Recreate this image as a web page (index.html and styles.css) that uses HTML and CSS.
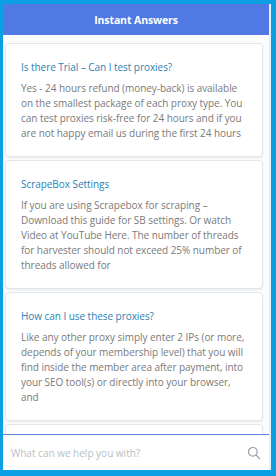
FILE: index.html
```html
<!DOCTYPE html>
<html>
<head>
<meta charset="utf-8">
<link rel="stylesheet" href="styles.css">
</head>
<body>
<div class="panel">
  <div class="header">Instant Answers</div>
  <div class="list">
    <div class="card">
      <div class="title">Is there Trial – Can I test proxies?</div>
      <div class="body">Yes - 24 hours refund (money-back) is available on the smallest package of each proxy type. You can test proxies risk-free for 24 hours and if you are not happy email us during the first 24 hours</div>
    </div>
    <div class="card">
      <div class="title">ScrapeBox Settings</div>
      <div class="body">If you are using Scrapebox for scraping – Download this guide for SB settings. Or watch Video at YouTube Here. The number of threads for harvester should not exceed 25% number of threads allowed for</div>
    </div>
    <div class="card">
      <div class="title">How can I use these proxies?</div>
      <div class="body">Like any other proxy simply enter 2 IPs (or more, depends of your membership level) that you will find inside the member area after payment, into your SEO tool(s) or directly into your browser, and</div>
    </div>
    <div class="card card-stub"></div>
  </div>
  <div class="search">
    <span class="placeholder">What can we help you with?</span>
    <svg class="icon" width="14" height="14" viewBox="0 0 14 14"><circle cx="5.8" cy="5.8" r="4.3" fill="none" stroke="#9aa0a6" stroke-width="1.2"/><line x1="9" y1="9" x2="12.6" y2="12.6" stroke="#9aa0a6" stroke-width="1.3" stroke-linecap="round"/></svg>
  </div>
</div>
</body>
</html>
```
FILE: styles.css
```css
html, body {
  margin: 0;
  padding: 0;
  height: 100%;
}
body {
  background: #0b9fe4;
  font-family: "Open Sans", "Noto Sans", sans-serif;
  padding: 4px 5px 6px 3px;
  box-sizing: border-box;
}
.panel {
  height: 100%;
  display: flex;
  flex-direction: column;
  background: #fbfcfd;
  border-right: 2px solid #e3f2fb;
  overflow: hidden;
}
.header {
  height: 31px;
  flex: none;
  background: #5079e3;
  color: #fff;
  font-weight: 700;
  font-size: 10.5px;
  display: flex;
  align-items: center;
  justify-content: center;
  letter-spacing: -0.1px;
}
.list {
  flex: 1;
  min-height: 0;
  overflow: hidden;
  padding: 8px 6px 0 2px;
  display: flex;
  flex-direction: column;
  gap: 3px;
}
.card {
  flex: none;
  background: #fff;
  border: 1px solid #e3e6ea;
  border-radius: 4px;
  box-shadow: 0 1px 2px rgba(0,0,0,0.08);
  padding: 15px 14px 15px 15px;
}
.card-stub {
  height: 60px;
  box-sizing: border-box;
}
.title {
  color: #2e7fb3;
  font-size: 10px;
  line-height: 16px;
  margin-bottom: 6px;
  letter-spacing: -0.05px;
}
.body {
  color: #7a7a7a;
  font-size: 10px;
  line-height: 15px;
  letter-spacing: -0.05px;
}
.search {
  flex: none;
  height: 35px;
  border-top: 1px solid #5a80e0;
  background: #fff;
  display: flex;
  align-items: center;
  justify-content: space-between;
  padding: 0 8px 0 8px;
}
.placeholder {
  color: #b9bec4;
  font-size: 10px;
}
.icon {
  display: block;
}
```
